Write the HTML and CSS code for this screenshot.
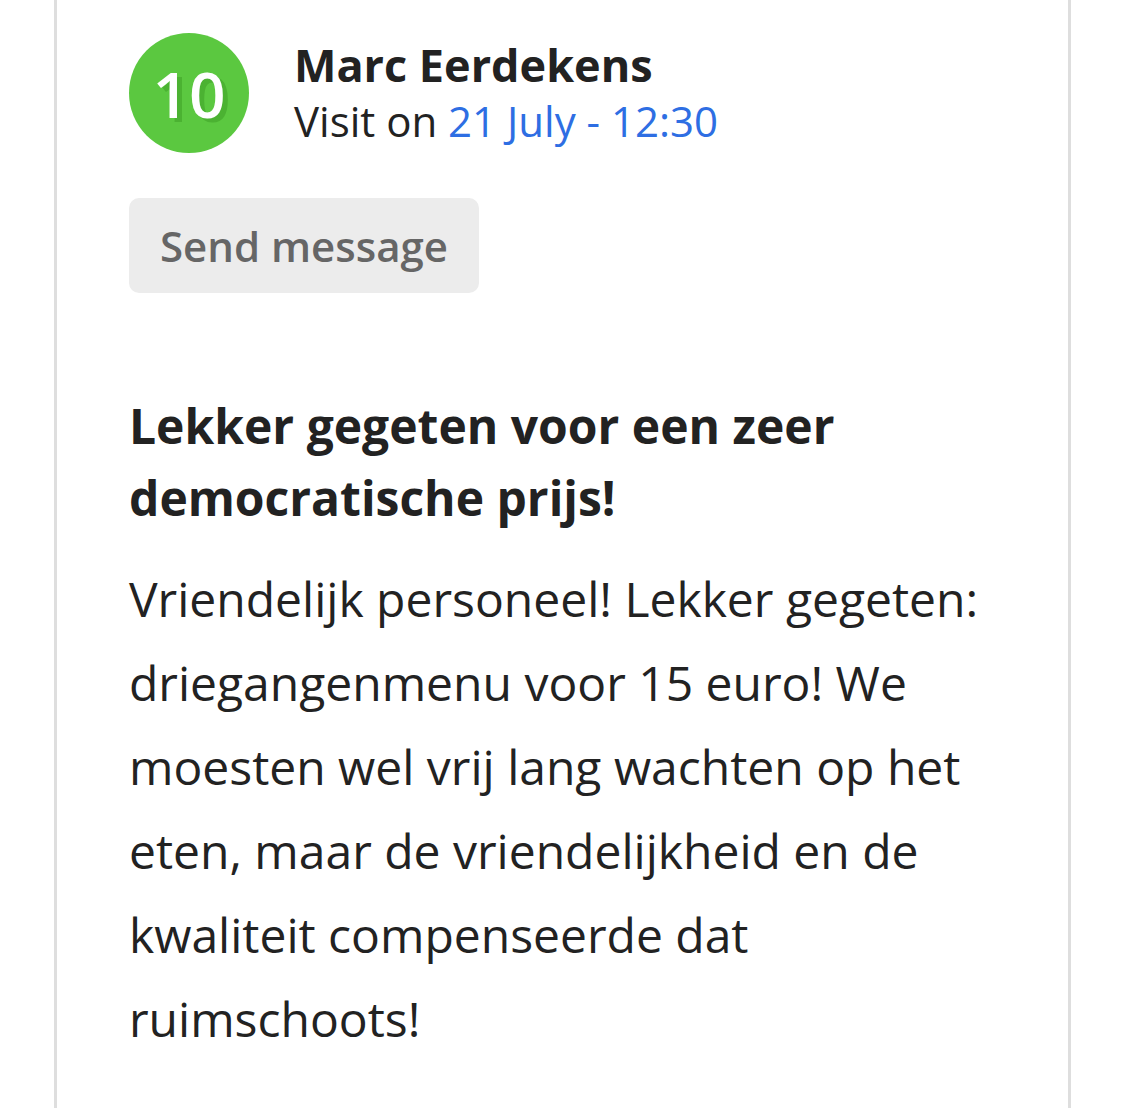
FILE: index.html
```html
<!DOCTYPE html>
<html lang="nl">
  <head>
    <meta charset="UTF-8" />
    <meta name="viewport" content="width=device-width, initial-scale=1.0" />
    <title>Review</title>
    <link rel="stylesheet" href="styles.css">
  </head>
  <body>
    <div class="review-card">
      <div class="review-header">
        <div class="score">10</div>
        <div class="reviewer">
          <div class="reviewer-name">Marc Eerdekens</div>
          <div class="visit">Visit on <span class="visit-date">21 July - 12:30</span></div>
        </div>
      </div>

      <button class="btn btn-message">Send message</button>

      <h2 class="review-title">Lekker gegeten voor een zeer democratische prijs!</h2>
      <p class="review-text">
        Vriendelijk personeel! Lekker gegeten: driegangenmenu voor 15 euro! We
        moesten wel vrij lang wachten op het eten, maar de vriendelijkheid en de
        kwaliteit compenseerde dat ruimschoots!
      </p>
    </div>
  </body>
</html>
```

FILE: styles.css
```css
body {
  font-family: "Open Sans", Arial, sans-serif;
  margin: 0;
  padding: 0;
  background-color: white;
  color: #222;
}
.review-card {
  margin-left: 54px;
  width: 1017px;
  min-height: 1108px;
  border-left: 3px solid #dedede;
  border-right: 3px solid #dedede;
  padding: 33px 72px 0 72px;
  box-sizing: border-box;
}
.review-header {
  display: flex;
  align-items: center;
  gap: 45px;
}
.score {
  width: 120px;
  height: 120px;
  border-radius: 50%;
  background-color: #5bc840;
  color: white;
  font-size: 64px;
  font-weight: 600;
  display: flex;
  align-items: center;
  justify-content: center;
  text-shadow: 5px 4px 0 #4bb232;
  flex-shrink: 0;
}
.reviewer-name {
  font-size: 45px;
  font-weight: bold;
  line-height: 56px;
}
.visit {
  font-size: 42px;
  line-height: 56px;
}
.visit-date {
  color: #2e6ee3;
}
.btn {
  border: none;
  cursor: pointer;
  font-family: inherit;
}
.btn-message {
  display: block;
  margin-top: 45px;
  height: 95px;
  padding: 0 31px;
  border-radius: 10px;
  background-color: #ececec;
  color: #666;
  font-size: 42px;
  font-weight: 600;
}
.review-title {
  margin: 97px 0 0 0;
  font-size: 48px;
  line-height: 72px;
  font-weight: bold;
}
.review-text {
  margin: 23px 0 0 0;
  font-size: 48px;
  line-height: 84px;
}
```
